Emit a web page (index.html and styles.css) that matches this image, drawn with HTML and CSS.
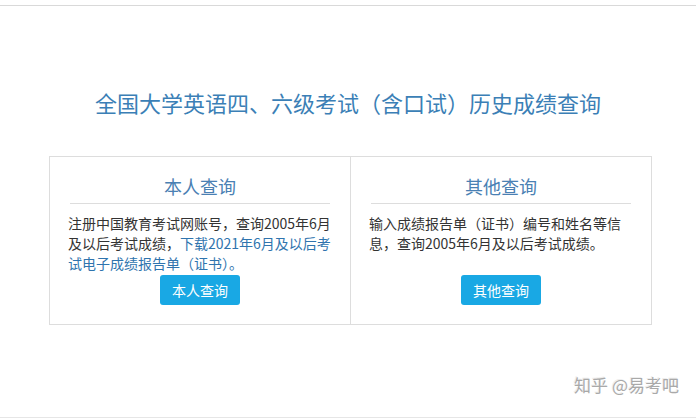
FILE: index.html
```html
<!DOCTYPE html>
<html lang="zh-CN">
<head>
  <meta charset="UTF-8">
  <meta name="viewport" content="width=device-width, initial-scale=1.0">
  <title>全国大学英语四、六级考试历史成绩查询</title>
  <link rel="stylesheet" href="styles.css">
</head>
<body>
  <div id="page">
    <h1 class="title">全国大学英语四、六级考试（含口试）历史成绩查询</h1>
    <div class="query-box">
      <div class="query-col">
        <h2>本人查询</h2>
        <p class="desc">注册中国教育考试网账号，查询2005年6月及以后考试成绩，<a href="#">下载2021年6月及以后考试电子成绩报告单（证书）。</a></p>
        <button>本人查询</button>
      </div>
      <div class="query-col">
        <h2>其他查询</h2>
        <p class="desc">输入成绩报告单（证书）编号和姓名等信息，查询2005年6月及以后考试成绩。</p>
        <button>其他查询</button>
      </div>
    </div>
    <div class="watermark">知乎 @易考吧</div>
  </div>
</body>
</html>
```

FILE: styles.css
```css
body {
  font-family: "Noto Sans CJK SC", "Noto Sans", sans-serif;
  margin: 0;
  padding: 0;
  background: #fff;
  color: #333;
}
#page {
  position: relative;
  margin-top: 5px;
  height: 411px;
  border-top: 1px solid #d9d9d9;
  border-bottom: 1px solid #e6e6e6;
}
.title {
  margin: 0;
  padding-top: 81px;
  font-size: 22px;
  line-height: 30px;
  font-weight: normal;
  text-align: center;
  color: #3b7fb6;
}
.query-box {
  display: flex;
  width: 601px;
  margin: 39px 0 0 49px;
  border: 1px solid #ddd;
}
.query-col {
  flex: 1;
  padding: 17px 18px 19px;
  text-align: center;
}
.query-col + .query-col {
  border-left: 1px solid #ddd;
}
.query-col h2 {
  margin: 0 2px;
  padding-bottom: 5px;
  font-size: 18px;
  line-height: 24px;
  font-weight: normal;
  color: #4a80b3;
  border-bottom: 1px solid #ddd;
}
.desc {
  margin: 9px 0 2px;
  min-height: 60px;
  font-size: 14px;
  line-height: 20px;
  text-align: left;
}
.desc a {
  color: #2f74ae;
  text-decoration: none;
}
button {
  width: 80px;
  height: 30px;
  padding: 0;
  border: none;
  border-radius: 3px;
  background-color: #19a8e4;
  color: white;
  font-family: inherit;
  font-size: 14px;
  cursor: pointer;
}
.watermark {
  position: absolute;
  right: 17px;
  top: 366px;
  font-size: 17px;
  color: #a9a9a9;
  text-shadow: 1px 1px 0 #fff, -1px -1px 0 #eee;
}
```
